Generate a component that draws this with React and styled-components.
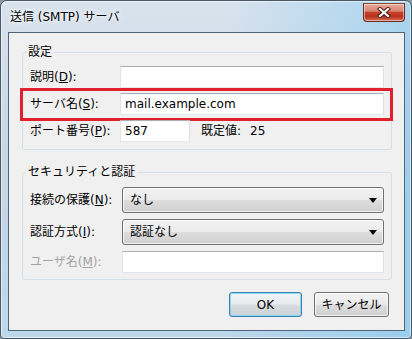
import React from "react";
import styled, { createGlobalStyle } from "styled-components";

const GlobalStyle = createGlobalStyle`
  html, body {
    margin: 0;
    padding: 0;
    background: #8a96a3;
  }
  body {
    font-family: "DejaVu Sans", "Noto Sans CJK JP", sans-serif;
    font-size: 12px;
    color: #000;
  }
`;

const Window = styled.div`
  box-sizing: border-box;
  width: 412px;
  height: 339px;
  display: flex;
  flex-direction: column;
  border: 1px solid #4a5866;
  border-radius: 7px 7px 4px 4px;
  background:
    linear-gradient(90deg, rgba(255, 255, 255, 0) 55%, rgba(110, 195, 240, 0.45) 100%),
    linear-gradient(180deg, #d9e3ee 0%, #c8d6e4 45%, #bdd7eb 100%);
  box-shadow: inset 0 0 0 1px rgba(255, 255, 255, 0.55);
`;

const TitleBar = styled.div`
  display: flex;
  align-items: flex-start;
  height: 31px;
  padding: 0 6px 0 9px;
`;

const Title = styled.div`
  margin-top: 8px;
  line-height: 16px;
  text-shadow: 0 0 6px #fff, 0 0 3px #fff;
`;

const CloseButton = styled.div`
  box-sizing: border-box;
  margin: 2px 0 0 auto;
  width: 42px;
  height: 19px;
  border: 1px solid #6d2b22;
  border-top-color: #8a4a40;
  border-radius: 0 0 4px 4px;
  background: linear-gradient(
    180deg,
    #e9a999 0%,
    #d98572 42%,
    #c4412e 50%,
    #b9331f 75%,
    #d6745a 100%
  );
  box-shadow: inset 0 0 0 1px rgba(255, 255, 255, 0.45);
  display: flex;
  align-items: center;
  justify-content: center;
`;

const Client = styled.div`
  flex: 1;
  display: flex;
  flex-direction: column;
  margin: 0 6px 7px 7px;
  padding: 12px 12px 13px 13px;
  border: 1px solid #51657a;
  background: #f0f0f0;
`;

const Group = styled.fieldset`
  margin: 0;
  min-width: 0;
  padding: ${(p) => p.$padTop}px 0 ${(p) => p.$padBottom}px;
  border: 1px solid #d5dfe5;
  border-radius: 3px;

  & + & {
    margin-top: 15px;
  }
`;

const Legend = styled.legend`
  margin-left: 3px;
  padding: 0 2px;
  line-height: 14px;
`;

const Fields = styled.div`
  display: flex;
  flex-direction: column;
  gap: ${(p) => p.$gap}px;
`;

const Row = styled.div`
  position: relative;
  display: flex;
  align-items: center;
  height: ${(p) => p.$height}px;
  padding: 0 7px;

  ${(p) =>
    p.$highlight &&
    `
    &::after {
      content: "";
      position: absolute;
      top: -5px;
      bottom: -6px;
      left: -3px;
      right: -2px;
      border: 3px solid #e0202c;
      pointer-events: none;
    }
  `}
`;

const Label = styled.div`
  flex: none;
  width: ${(p) => p.$width}px;
  line-height: 16px;
  white-space: nowrap;
  color: ${(p) => (p.$disabled ? "#a3a3a3" : "#000")};
`;

const TextBox = styled.div`
  box-sizing: border-box;
  flex: ${(p) => (p.$width ? "none" : "1")};
  width: ${(p) => (p.$width ? `${p.$width}px` : "auto")};
  height: 100%;
  display: flex;
  align-items: center;
  padding: 0 4px;
  border: 1px solid;
  border-color: #abadb3 #dbdfe6 #e3e9ef #e2e3ea;
  background: #fff;
  line-height: 16px;
  white-space: nowrap;
`;

const Hint = styled.span`
  margin-left: ${(p) => p.$gap}px;
  line-height: 16px;
`;

const Combo = styled.div`
  box-sizing: border-box;
  flex: 1;
  height: 100%;
  display: flex;
  align-items: center;
  justify-content: space-between;
  padding: 0 6px 0 7px;
  border: 1px solid #707070;
  border-radius: 3px;
  background: linear-gradient(180deg, #f2f2f2 0%, #ebebeb 48%, #dddddd 52%, #cfcfcf 100%);
  box-shadow: inset 0 0 0 1px rgba(255, 255, 255, 0.75);
  line-height: 16px;
`;

const ButtonBar = styled.div`
  display: flex;
  justify-content: flex-end;
  gap: 12px;
  margin-top: 12px;
  padding-right: 3px;
`;

const Button = styled.div`
  box-sizing: border-box;
  width: ${(p) => p.$width}px;
  height: 25px;
  display: flex;
  align-items: center;
  justify-content: center;
  border: 1px solid ${(p) => (p.$default ? "#3c7fb1" : "#707070")};
  border-radius: 3px;
  background: ${(p) =>
    p.$default
      ? "linear-gradient(180deg, #f1f4f6 0%, #e7ebee 48%, #d8dde1 52%, #cbd1d6 100%)"
      : "linear-gradient(180deg, #f2f2f2 0%, #ebebeb 48%, #dddddd 52%, #cfcfcf 100%)"};
  box-shadow: inset 0 0 0 1px
    ${(p) => (p.$default ? "rgba(120, 215, 245, 0.85)" : "rgba(255, 255, 255, 0.75)")};
  line-height: 16px;
`;

const CloseIcon = () => (
  <svg width="14" height="11" viewBox="0 0 14 11">
    <path d="M3 2 L11 9 M11 2 L3 9" stroke="#4a1c16" strokeWidth="4.2" strokeLinecap="square" />
    <path d="M3 2 L11 9 M11 2 L3 9" stroke="#fff" strokeWidth="2.2" strokeLinecap="square" />
  </svg>
);

const ArrowDown = () => (
  <svg width="8" height="5" viewBox="0 0 8 5">
    <polygon points="0,0 8,0 4,5" fill="#000" />
  </svg>
);

export default function App() {
  return (
    <>
      <GlobalStyle />
      <Window>
        <TitleBar>
          <Title>送信 (SMTP) サーバ</Title>
          <CloseButton>
            <CloseIcon />
          </CloseButton>
        </TitleBar>
        <Client>
          <Group $padTop={7} $padBottom={7}>
            <Legend>設定</Legend>
            <Fields $gap={5}>
              <Row $height={22}>
                <Label $width={90}>
                  説明(<u>D</u>):
                </Label>
                <TextBox />
              </Row>
              <Row $height={22} $highlight>
                <Label $width={90}>
                  サーバ名(<u>S</u>):
                </Label>
                <TextBox>mail.example.com</TextBox>
              </Row>
              <Row $height={22}>
                <Label $width={90}>
                  ポート番号(<u>P</u>):
                </Label>
                <TextBox $width={70}>587</TextBox>
                <Hint $gap={11}>既定値:</Hint>
                <Hint $gap={9}>25</Hint>
              </Row>
            </Fields>
          </Group>
          <Group $padTop={8} $padBottom={6}>
            <Legend>セキュリティと認証</Legend>
            <Fields $gap={6}>
              <Row $height={26}>
                <Label $width={92}>
                  接続の保護(<u>N</u>):
                </Label>
                <Combo>
                  なし
                  <ArrowDown />
                </Combo>
              </Row>
              <Row $height={26}>
                <Label $width={92}>
                  認証方式(<u>I</u>):
                </Label>
                <Combo>
                  認証なし
                  <ArrowDown />
                </Combo>
              </Row>
              <Row $height={22}>
                <Label $width={92} $disabled>
                  ユーザ名(<u>M</u>):
                </Label>
                <TextBox />
              </Row>
            </Fields>
          </Group>
          <ButtonBar>
            <Button $width={73} $default>
              OK
            </Button>
            <Button $width={75}>キャンセル</Button>
          </ButtonBar>
        </Client>
      </Window>
    </>
  );
}
